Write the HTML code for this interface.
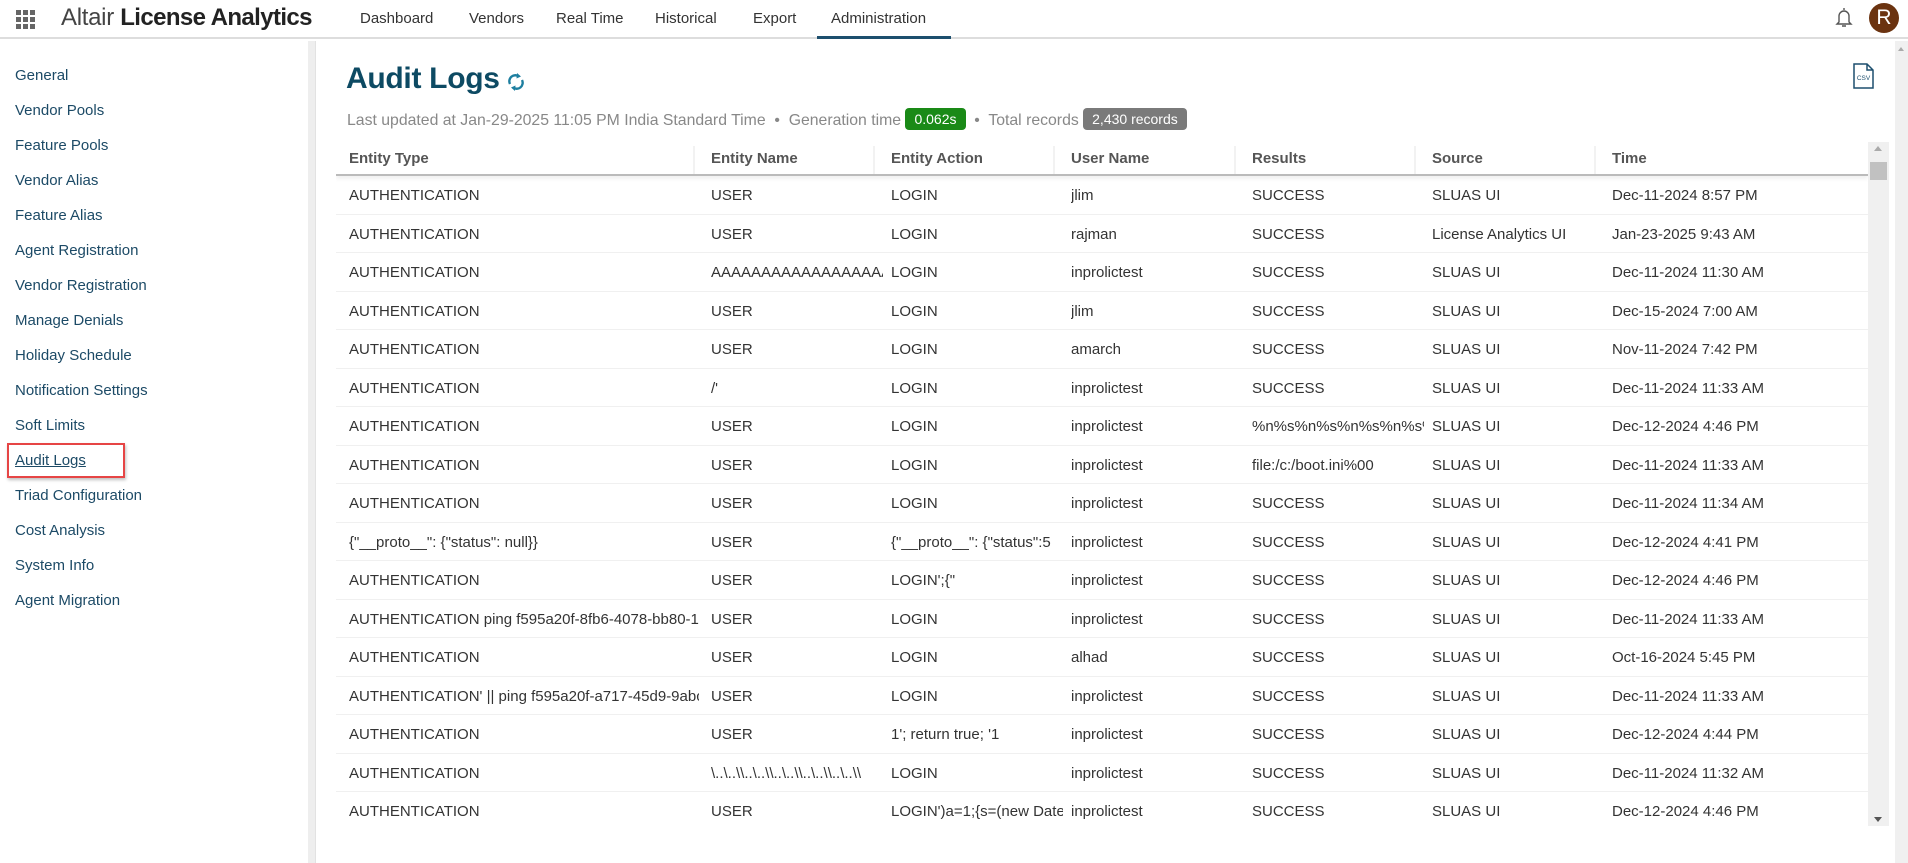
<!DOCTYPE html>
<html><head><meta charset="utf-8">
<style>
*{box-sizing:border-box;margin:0;padding:0}
body{width:1908px;height:863px;overflow:hidden;background:#fff;font-family:"Liberation Sans",sans-serif;position:relative;color:#333}
.hdr{position:absolute;left:0;top:0;width:1908px;height:39px;border-bottom:2px solid #ddd}
.grid{position:absolute;left:16px;top:10px;width:20px;height:20px}
.grid i{position:absolute;width:5px;height:5px;background:#666}
.logo{position:absolute;left:61px;top:4px;font-size:24px;color:#444;white-space:nowrap;letter-spacing:-0.3px}
.logo b{font-weight:bold;color:#222;letter-spacing:-0.6px}
.nav{position:absolute;top:10px;font-size:15px;color:#333}
.ul{position:absolute;left:817px;top:36px;width:134px;height:3px;background:#1d4f6e}
.strip{position:absolute;left:308px;top:41px;width:8px;height:822px;background:#eee;border-right:1px solid #e2e2e2}
.si{position:absolute;left:15px;font-size:15px;color:#1c4a66}
.sel{position:absolute;left:7px;top:443px;width:118px;height:35px;border:2px solid #e64545;box-shadow:1px 2px 3px rgba(0,0,0,.25)}
.title{position:absolute;left:346px;top:62px;font-size:30px;font-weight:bold;color:#0d4a63;letter-spacing:-0.3px}
.sub{position:absolute;left:347px;top:108px;font-size:15.8px;color:#888;white-space:nowrap}
.bg{display:inline-block;color:#fff;border-radius:4px;padding:3px 9px;font-size:14px;vertical-align:1px}
.tbl{position:absolute;left:336px;top:142px;width:1532px;height:688px;overflow:hidden}
.row{position:absolute;left:0;width:1532px;height:38.5px;border-bottom:1px solid #f0f0f0}
.row span{position:absolute;top:11px;font-size:15px;white-space:nowrap;overflow:hidden;color:#333}
.th{position:absolute;left:0;top:0;width:1532px;height:34px;border-bottom:2px solid #bbb;box-shadow:0 3px 4px rgba(0,0,0,.06)}
.th span{position:absolute;top:8px;font-size:15px;font-weight:bold;color:#555}
.th i{position:absolute;top:4px;width:2px;height:28px;background:#f2f2f2}
.sb{position:absolute;left:1868px;top:142px;width:21px;height:684px;background:#f0f0f0}
.psb{position:absolute;left:1895px;top:41px;width:13px;height:822px;background:#f0f0f0}
</style></head><body>
<div class="hdr"></div>
<div class="grid"><i style="left:0;top:0"></i><i style="left:7px;top:0"></i><i style="left:14px;top:0"></i><i style="left:0;top:7px"></i><i style="left:7px;top:7px"></i><i style="left:14px;top:7px"></i><i style="left:0;top:14px"></i><i style="left:7px;top:14px"></i><i style="left:14px;top:14px"></i></div>
<div class="logo">Altair <b>License Analytics</b></div>
<div class="nav" style="left:360px">Dashboard</div>
<div class="nav" style="left:469px">Vendors</div>
<div class="nav" style="left:556px">Real Time</div>
<div class="nav" style="left:655px">Historical</div>
<div class="nav" style="left:753px">Export</div>
<div class="nav" style="left:831px">Administration</div>
<div class="ul"></div>
<svg style="position:absolute;left:1834px;top:6px" width="20" height="24" viewBox="0 0 20 24"><path d="M10 2v2M5 16V10a5 5 0 0 1 10 0v6l2 2H3z M8 20h4" fill="none" stroke="#555" stroke-width="1.4"/></svg>
<div style="position:absolute;left:1869px;top:3px;width:30px;height:30px;border-radius:50%;background:#6b3310;color:#fff;font-size:21px;text-align:center;line-height:30px">R</div>

<div class="strip"></div>
<div class="si" style="top:67px">General</div>
<div class="si" style="top:102px">Vendor Pools</div>
<div class="si" style="top:137px">Feature Pools</div>
<div class="si" style="top:172px">Vendor Alias</div>
<div class="si" style="top:207px">Feature Alias</div>
<div class="si" style="top:242px">Agent Registration</div>
<div class="si" style="top:277px">Vendor Registration</div>
<div class="si" style="top:312px">Manage Denials</div>
<div class="si" style="top:347px">Holiday Schedule</div>
<div class="si" style="top:382px">Notification Settings</div>
<div class="si" style="top:417px">Soft Limits</div>
<div class="si" style="top:452px;text-decoration:underline">Audit Logs</div>
<div class="si" style="top:487px">Triad Configuration</div>
<div class="si" style="top:522px">Cost Analysis</div>
<div class="si" style="top:557px">System Info</div>
<div class="si" style="top:592px">Agent Migration</div>
<div class="sel"></div>

<div class="title">Audit Logs</div>
<svg style="position:absolute;left:506px;top:71px" width="20" height="22" viewBox="0 0 20 22"><path d="M4 13a6 6 0 0 1 9-7.5M16 9a6 6 0 0 1-9 7.5" fill="none" stroke="#1e7fa0" stroke-width="2.4"/><path d="M11 2l4 3.5-4.5 2z M9 20l-4-3.5 4.5-2z" fill="#1e7fa0"/></svg>
<div class="sub">Last updated at Jan-29-2025 11:05 PM India Standard Time &nbsp;•&nbsp; Generation time <span class="bg" style="background:#1a8a17">0.062s</span> &nbsp;•&nbsp; Total records <span class="bg" style="background:#7a7a7a">2,430 records</span></div>
<svg style="position:absolute;left:1853px;top:63px" width="22" height="26" viewBox="0 0 22 26"><path d="M1 1h13l6 6v18H1z M14 1v6h6" fill="#fff" stroke="#1d4f6e" stroke-width="1.5"/><text x="10.5" y="17" font-size="6.5" text-anchor="middle" fill="#1d4f6e" font-family="Liberation Sans">CSV</text></svg>

<div class="tbl">
<div class="th"><span style="left:13px">Entity Type</span><i style="left:357px"></i><span style="left:375px">Entity Name</span><i style="left:537px"></i><span style="left:555px">Entity Action</span><i style="left:717px"></i><span style="left:735px">User Name</span><i style="left:898px"></i><span style="left:916px">Results</span><i style="left:1078px"></i><span style="left:1096px">Source</span><i style="left:1258px"></i><span style="left:1276px">Time</span></div>
<div id="rows"></div>
</div>
<div class="sb"><div style="position:absolute;left:6px;top:4px;border:4px solid transparent;border-bottom:5px solid #aaa;border-top:0"></div><div style="position:absolute;left:2px;top:20px;width:17px;height:18px;background:#c1c1c1"></div><div style="position:absolute;left:6px;bottom:4px;border:4px solid transparent;border-top:5px solid #555;border-bottom:0"></div></div>
<div class="psb"><div style="position:absolute;left:3px;top:6px;border:3px solid transparent;border-bottom:4px solid #aaa;border-top:0"></div></div>
<script>
var d=[["AUTHENTICATION","USER","LOGIN","jlim","SUCCESS","SLUAS UI","Dec-11-2024 8:57 PM"],
["AUTHENTICATION","USER","LOGIN","rajman","SUCCESS","License Analytics UI","Jan-23-2025 9:43 AM"],
["AUTHENTICATION","AAAAAAAAAAAAAAAAAAAAAA","LOGIN","inprolictest","SUCCESS","SLUAS UI","Dec-11-2024 11:30 AM"],
["AUTHENTICATION","USER","LOGIN","jlim","SUCCESS","SLUAS UI","Dec-15-2024 7:00 AM"],
["AUTHENTICATION","USER","LOGIN","amarch","SUCCESS","SLUAS UI","Nov-11-2024 7:42 PM"],
["AUTHENTICATION","/'","LOGIN","inprolictest","SUCCESS","SLUAS UI","Dec-11-2024 11:33 AM"],
["AUTHENTICATION","USER","LOGIN","inprolictest","%n%s%n%s%n%s%n%s%n%s","SLUAS UI","Dec-12-2024 4:46 PM"],
["AUTHENTICATION","USER","LOGIN","inprolictest","file:/c:/boot.ini%00","SLUAS UI","Dec-11-2024 11:33 AM"],
["AUTHENTICATION","USER","LOGIN","inprolictest","SUCCESS","SLUAS UI","Dec-11-2024 11:34 AM"],
["{\"__proto__\": {\"status\": null}}","USER","{\"__proto__\": {\"status\":5","inprolictest","SUCCESS","SLUAS UI","Dec-12-2024 4:41 PM"],
["AUTHENTICATION","USER","LOGIN';{\"","inprolictest","SUCCESS","SLUAS UI","Dec-12-2024 4:46 PM"],
["AUTHENTICATION ping f595a20f-8fb6-4078-bb80-1234","USER","LOGIN","inprolictest","SUCCESS","SLUAS UI","Dec-11-2024 11:33 AM"],
["AUTHENTICATION","USER","LOGIN","alhad","SUCCESS","SLUAS UI","Oct-16-2024 5:45 PM"],
["AUTHENTICATION' || ping f595a20f-a717-45d9-9abc","USER","LOGIN","inprolictest","SUCCESS","SLUAS UI","Dec-11-2024 11:33 AM"],
["AUTHENTICATION","USER","1'; return true; '1","inprolictest","SUCCESS","SLUAS UI","Dec-12-2024 4:44 PM"],
["AUTHENTICATION","\\..\\..\\\\..\\..\\\\..\\..\\\\..\\..\\\\..\\..\\\\","LOGIN","inprolictest","SUCCESS","SLUAS UI","Dec-11-2024 11:32 AM"],
["AUTHENTICATION","USER","LOGIN')a=1;{s=(new Date","inprolictest","SUCCESS","SLUAS UI","Dec-12-2024 4:46 PM"]];
var L=[13,375,555,735,916,1096,1276],W=[350,172,172,172,172,172,250],h="";
d.forEach(function(r,i){h+='<div class="row" style="top:'+(34+i*38.5)+'px">';r.forEach(function(c,j){h+='<span style="left:'+L[j]+'px;max-width:'+W[j]+'px">'+c.replace(/&/g,"&amp;").replace(/</g,"&lt;")+'</span>'});h+='</div>'});
document.getElementById("rows").innerHTML=h;
</script>
</body></html>
